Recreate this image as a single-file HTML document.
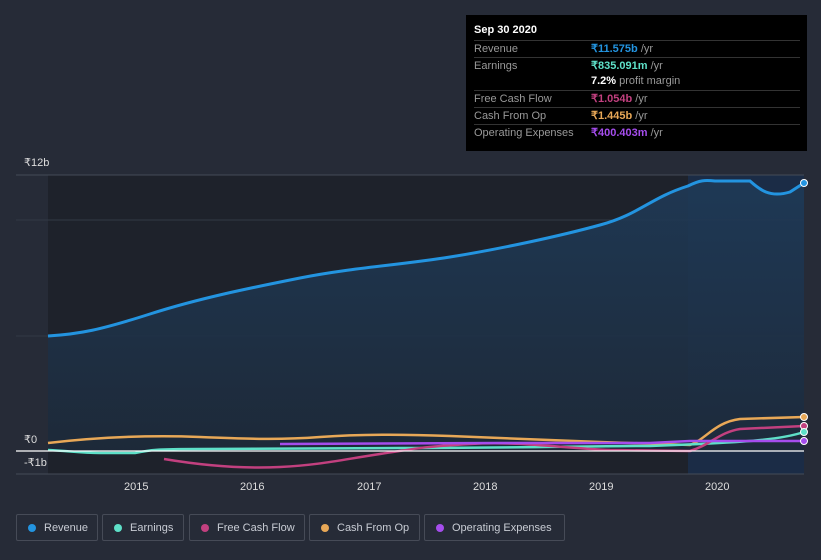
<html><head><style>
body{margin:0;width:821px;height:560px;background:#262b37;font-family:"Liberation Sans",sans-serif;overflow:hidden;position:relative}
.tt{position:absolute;left:466px;top:15px;width:341px;height:136px;background:#000;color:#999;font-size:11px}
.tt .h{color:#fff;font-weight:bold;padding:9px 0 0 8px;height:17px}
.r{position:absolute;left:8px;width:326px;border-top:1px solid #333;height:16px;line-height:16px}
.r span{position:absolute;left:117px}
.leg{position:absolute;top:514px;height:27px;border:1px solid #464b57;border-radius:2px;color:#c8ccd4;font-size:11px;line-height:27px;box-sizing:border-box;padding-left:27px}
.leg i{position:absolute;left:11px;top:9px;width:8px;height:8px;border-radius:50%}
.ax{position:absolute;color:#ddd;font-size:11px}
</style></head><body>
<svg width="821" height="560" style="position:absolute;left:0;top:0">
<defs><linearGradient id="g" x1="0" y1="0" x2="0" y2="1"><stop offset="0" stop-color="#1f3a57"/><stop offset="1" stop-color="#1d2a3a"/></linearGradient></defs>
<rect x="48" y="175" width="640" height="299" fill="#1e222b"/>
<rect x="688" y="175" width="116" height="299" fill="#1b2c46"/>
<line x1="16" y1="175" x2="804" y2="175" stroke="#444b57"/>
<line x1="16" y1="220" x2="804" y2="220" stroke="#333a45"/>
<line x1="16" y1="336" x2="804" y2="336" stroke="#333a45"/>
<path d="M48,336 C80,334 100,330 150,314 S250,288 300,278 S400,265 450,257 S560,236 600,225 S650,198 688,186 C700,180 705,180 715,181 L750,181 C760,190 770,198 790,192 L804,183 L804,451 L48,451Z" fill="url(#g)" opacity="0.9"/>
<path d="M48,336 C80,334 100,330 150,314 S250,288 300,278 S400,265 450,257 S560,236 600,225 S650,198 688,186 C700,180 705,180 715,181 L750,181 C760,190 770,198 790,192 L804,183" fill="none" stroke="#2394e0" stroke-width="3"/>
<path d="M48,443 C100,437 150,435 200,437 S280,440 320,437 S400,434 450,436 S550,440 600,442 L690,445 C705,440 715,422 740,419 L804,417" fill="none" stroke="#e8a857" stroke-width="2.5"/>
<path d="M48,450 C70,451 80,453 100,453 L135,453 C150,450 155,449 200,449 S300,448 400,448 S600,446 650,446 L700,444 C740,442 780,440 804,432" fill="none" stroke="#5ee0c8" stroke-width="2.5"/>
<path d="M164,459 C200,465 240,469 280,467 S340,460 380,454 S420,447 470,444 S560,448 610,450 L690,451 C710,445 720,432 740,429 L804,426" fill="none" stroke="#c2407f" stroke-width="2.5"/>
<path d="M280,444 L500,443 L600,443 L650,443 L690,441 L740,441 L804,441" fill="none" stroke="#a54ded" stroke-width="2.5"/>
<line x1="16" y1="451" x2="804" y2="451" stroke="#fff" stroke-width="1.2"/>
<line x1="16" y1="474" x2="804" y2="474" stroke="#444b57"/>
<circle cx="804" cy="183" r="3.5" fill="#2394e0" stroke="#fff"/>
<circle cx="804" cy="417" r="3.5" fill="#e8a857" stroke="#fff"/>
<circle cx="804" cy="426" r="3.5" fill="#c2407f" stroke="#fff"/>
<circle cx="804" cy="432" r="3.5" fill="#5ee0c8" stroke="#fff"/>
<circle cx="804" cy="441" r="3.5" fill="#a54ded" stroke="#fff"/>
</svg>
<div class="ax" style="left:24px;top:156px">₹12b</div>
<div class="ax" style="left:24px;top:433px">₹0</div>
<div class="ax" style="left:24px;top:456px">-₹1b</div>
<div class="ax" style="left:124px;top:481px">2015</div>
<div class="ax" style="left:240px;top:481px">2016</div>
<div class="ax" style="left:357px;top:481px">2017</div>
<div class="ax" style="left:473px;top:481px">2018</div>
<div class="ax" style="left:589px;top:481px">2019</div>
<div class="ax" style="left:705px;top:481px">2020</div>
<div class="tt"><div class="h">Sep 30 2020</div>
<div class="r" style="top:25px">Revenue<span><b style="color:#2394e0">₹11.575b</b> /yr</span></div>
<div class="r" style="top:42px">Earnings<span><b style="color:#5ee0c8">₹835.091m</b> /yr</span></div>
<div class="r" style="top:58px;border:0">&nbsp;<span><b style="color:#fff">7.2%</b> profit margin</span></div>
<div class="r" style="top:75px">Free Cash Flow<span><b style="color:#c2407f">₹1.054b</b> /yr</span></div>
<div class="r" style="top:92px">Cash From Op<span><b style="color:#e8a857">₹1.445b</b> /yr</span></div>
<div class="r" style="top:109px">Operating Expenses<span><b style="color:#a54ded">₹400.403m</b> /yr</span></div>
</div>
<div class="leg" style="left:16px;width:82px"><i style="background:#2394e0"></i>Revenue</div>
<div class="leg" style="left:102px;width:82px"><i style="background:#5ee0c8"></i>Earnings</div>
<div class="leg" style="left:189px;width:116px"><i style="background:#c2407f"></i>Free Cash Flow</div>
<div class="leg" style="left:309px;width:111px"><i style="background:#e8a857"></i>Cash From Op</div>
<div class="leg" style="left:424px;width:141px"><i style="background:#a54ded"></i>Operating Expenses</div>
</body></html>
